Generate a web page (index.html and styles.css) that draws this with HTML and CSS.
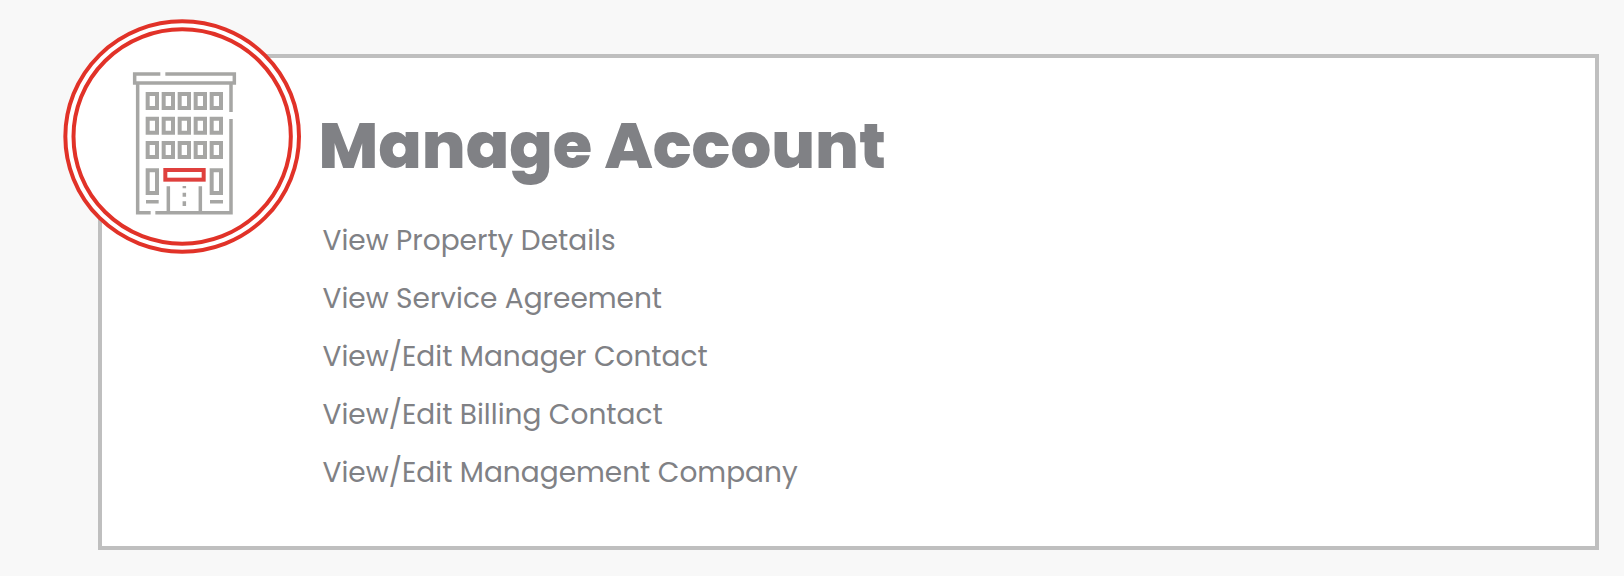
FILE: index.html
```html
<!DOCTYPE html>
<html lang="en">
<head>
    <meta charset="UTF-8">
    <meta name="viewport" content="width=device-width, initial-scale=1.0">
    <title>Manage Account</title>
    <link rel="stylesheet" href="styles.css">
</head>
<body>
    <div class="card">
        <svg class="card-icon" viewBox="36 24 720 708" aria-hidden="true">
            <!-- Rings -->
            <ellipse class="ring-outer" cx="396.5" cy="379.5" rx="350.5" ry="345.5"/>
            <ellipse class="ring" cx="396.5" cy="379.5" rx="326" ry="321.5"/>
            <!-- Roof and walls -->
            <g class="walls">
                <path d="M331 192H254V219H553V192H346"/>
                <path d="M302 608H263V219"/>
                <path d="M543 219V306M543 327V608H316"/>
                <path d="M355 529V608M451 529V608"/>
                <path d="M403 528V535M403 548V560M403 574V588"/>
                <path d="M288 575H326M480 575H519"/>
            </g>
            <!-- Windows -->
            <g class="windows">
                <path d="M293 252h28v42h-28zM341 252h28v42h-28zM389 252h28v42h-28zM437 252h28v42h-28zM485 252h28v42h-28z"/>
                <path d="M293 326h28v42h-28zM341 326h28v42h-28zM389 326h28v42h-28zM437 326h28v42h-28zM485 326h28v42h-28z"/>
                <path d="M293 399h28v42h-28zM341 399h28v42h-28zM389 399h28v42h-28zM437 399h28v42h-28zM485 399h28v42h-28z"/>
                <path d="M293 481h28v68h-28zM485 481h28v68h-28z"/>
            </g>
            <rect class="awning" x="346" y="480" width="115" height="29"/>
        </svg>
        <div class="card-body">
            <h2>Manage Account</h2>
            <ul class="links">
                <li><a href="#">View Property Details</a></li>
                <li><a href="#">View Service Agreement</a></li>
                <li><a href="#">View/Edit Manager Contact</a></li>
                <li><a href="#">View/Edit Billing Contact</a></li>
                <li><a href="#">View/Edit Management Company</a></li>
            </ul>
        </div>
    </div>
</body>
</html>
```
FILE: styles.css
```css
* {
    box-sizing: border-box;
}

body {
    font-family: Poppins, Inter, sans-serif;
    margin: 0;
    padding: 54px 25px 26px 98px;
    background-color: #f8f8f8;
    color: #808185;
}

.card {
    display: flex;
    align-items: flex-start;
    height: 496px;
    background-color: #fff;
    border: 4px solid #bfbfbf;
}

/* The icon hangs over the top left corner */
.card-icon {
    flex: none;
    width: 240px;
    height: 236px;
    margin: -40px 0 0 -40px;
    fill: none;
    stroke: #a6a6a4;
}

.ring-outer,
.ring {
    stroke: #e13228;
    stroke-width: 12;
}

.ring-outer {
    fill: #fff;
}

.walls {
    stroke-width: 10.5;
}

.windows {
    stroke-width: 12;
}

.awning {
    stroke: #df403d;
    stroke-width: 12;
}

.card-body {
    padding: 48px 0 0 16.5px;
}

h2 {
    margin: 0;
    font-size: 64px;
    font-weight: 800;
    line-height: 80px;
    white-space: nowrap;
}

.links {
    list-style-type: none;
    margin: 26px 0 0 4px;
    padding: 0;
}

.links li {
    height: 58px;
    line-height: 58px;
}

.links a {
    color: #808185;
    font-size: 28px;
    text-decoration: none;
    white-space: nowrap;
}
```
